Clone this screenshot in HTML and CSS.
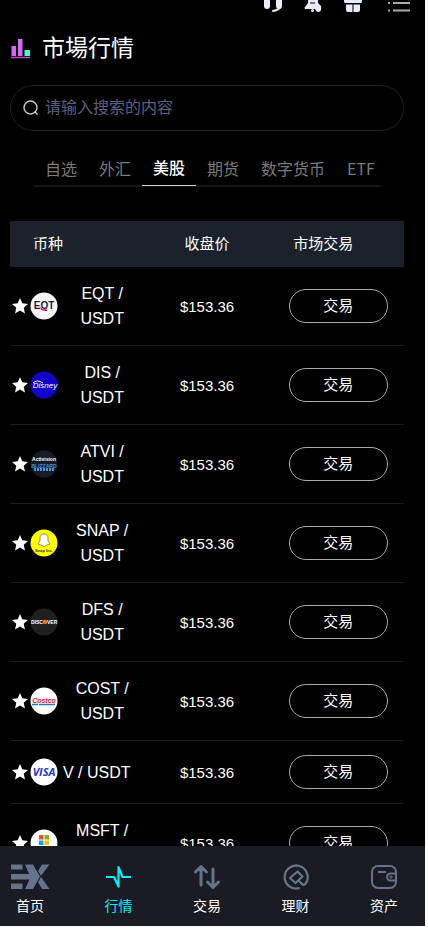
FILE: index.html
```html
<!DOCTYPE html>
<html lang="zh-CN">

<head>
    <meta charset="UTF-8">
    <meta name="viewport" content="width=device-width, initial-scale=1.0">
    <title>市場行情</title>
    <link rel="stylesheet" href="styles.css">
</head>

<body>

    <div class="app">
        <main class="content">
            <header class="topbar">
                <button class="icon-btn" aria-label="客服">
                    <svg width="20" height="20" viewBox="0 0 20 20">
                        <rect x="1" y="5" width="6" height="12" rx="3" fill="#eaeaff" />
                        <rect x="13" y="5" width="6" height="12" rx="3" fill="#eaeaff" />
                        <path d="M18 13q-1 5-8 6" fill="none" stroke="#eaeaff" stroke-width="2" stroke-linecap="round" />
                    </svg>
                </button>
                <button class="icon-btn" aria-label="通知">
                    <svg width="20" height="20" viewBox="0 0 20 20">
                        <path d="M10 1c4 0 5 3 5 6v4l3 3q1 5-2 6-3 0-4-3H2q-1-2 1-3l2-3V7c0-3 1-6 5-6z" fill="#eaeaff" />
                        <path d="M7 11h5" stroke="#000" />
                        <circle cx="9.500" cy="18.500" r="1.500" fill="#eaeaff" />
                    </svg>
                </button>
                <button class="icon-btn" aria-label="活动">
                    <svg width="20" height="20" viewBox="0 0 20 20">
                        <path d="M1 5h18v4q0 2-1 2H2q-1 0-1-2zM3 12.500h6.500V20H5q-2 0-2-2zM10.500 12.500H17V18q0 2-2 2h-4.500z" fill="#eaeaff" />
                    </svg>
                </button>
                <button class="icon-btn menu-btn" aria-label="菜单">
                    <svg width="24" height="20" viewBox="0 0 24 20">
                        <path d="M1 3h2M6 3h17M1 11h2M6 11h17M1 18.500h2M6 18.500h17" stroke="#aaa" stroke-width="2" />
                    </svg>
                </button>
            </header>

            <h1 class="title">
                <svg width="20" height="20" viewBox="0 0 20 20">
                    <path d="M1.500 7H6v10H1.500zM8 0h4.500v17H8z" fill="#d765f7" />
                    <path d="M14.500 11H20v6h-5.500z" fill="#3fffcd" />
                    <path d="M1 18.500h19" stroke="#b751d7" stroke-width="1.500" />
                </svg>
                市場行情
            </h1>

            <label class="search">
                <svg width="16" height="16" viewBox="0 0 16 16" fill="none" stroke="#ccc" stroke-width="1.400">
                    <circle cx="7.500" cy="7.500" r="6.500" />
                    <path d="M11.500 11.500l3 3" />
                </svg>
                <input type="text" placeholder="请输入搜索的内容" aria-label="搜索">
            </label>

            <nav class="tabs">
                <button class="tab">自选</button>
                <button class="tab">外汇</button>
                <button class="tab active">美股</button>
                <button class="tab">期货</button>
                <button class="tab">数字货币</button>
                <button class="tab">ETF</button>
            </nav>

            <table class="market">
                <thead>
                    <tr>
                        <th class="col-coin">币种</th>
                        <th class="col-price">收盘价</th>
                        <th class="col-trade">市场交易</th>
                    </tr>
                </thead>
                <tbody>
                    <tr>
                        <td>
                            <div class="coin">
                                <svg class="star" viewBox="0 0 16 16"><path d="M8 0l2.300 5.300 5.700.6-4.300 3.800 1.300 5.800L8 12.500l-5 3 1.300-5.800L0 5.900l5.700-.6z" /></svg>
                                <svg class="logo" viewBox="0 0 28 28">
                                    <circle cx="14" cy="14" r="13.500" fill="#f7f7fa" />
                                    <text class="logo-eqt" x="14" y="17" text-anchor="middle">EQT</text>
                                    <path d="M10.500 14.500q3.500 5 7 0l-1 3-3 1.500-3-1.500z" fill="#e6317c" />
                                </svg>
                                <span class="pair">EQT / USDT</span>
                            </div>
                        </td>
                        <td class="price">$153.36</td>
                        <td><button class="trade-btn">交易</button></td>
                    </tr>
                    <tr>
                        <td>
                            <div class="coin">
                                <svg class="star" viewBox="0 0 16 16"><path d="M8 0l2.300 5.300 5.700.6-4.300 3.800 1.300 5.800L8 12.500l-5 3 1.300-5.800L0 5.900l5.700-.6z" /></svg>
                                <svg class="logo" viewBox="0 0 28 28">
                                    <circle cx="14" cy="14" r="13.500" fill="#1203c9" />
                                    <path d="M3 12q4-4 10 0" fill="none" stroke="#fff" />
                                    <text class="logo-disney" x="15" y="17" text-anchor="middle">Disney</text>
                                </svg>
                                <span class="pair">DIS / USDT</span>
                            </div>
                        </td>
                        <td class="price">$153.36</td>
                        <td><button class="trade-btn">交易</button></td>
                    </tr>
                    <tr>
                        <td>
                            <div class="coin">
                                <svg class="star" viewBox="0 0 16 16"><path d="M8 0l2.300 5.300 5.700.6-4.300 3.800 1.300 5.800L8 12.500l-5 3 1.300-5.800L0 5.900l5.700-.6z" /></svg>
                                <svg class="logo" viewBox="0 0 28 28">
                                    <circle cx="14" cy="14" r="13.500" fill="#191c22" />
                                    <text class="logo-activision" x="14" y="11" text-anchor="middle">Activision</text>
                                    <text class="logo-blizzard" x="14" y="18" text-anchor="middle">BLIZZARD</text>
                                    <path d="M4 19.500h20" stroke="#4296e5" stroke-width="3" stroke-dasharray="2 1" />
                                </svg>
                                <span class="pair">ATVI / USDT</span>
                            </div>
                        </td>
                        <td class="price">$153.36</td>
                        <td><button class="trade-btn">交易</button></td>
                    </tr>
                    <tr>
                        <td>
                            <div class="coin">
                                <svg class="star" viewBox="0 0 16 16"><path d="M8 0l2.300 5.300 5.700.6-4.300 3.800 1.300 5.800L8 12.500l-5 3 1.300-5.800L0 5.900l5.700-.6z" /></svg>
                                <svg class="logo" viewBox="0 0 28 28">
                                    <circle cx="14" cy="14" r="13.500" fill="#fffc00" />
                                    <path d="M14 5c3 0 4 2 4 4v3l2 3-3 1-3 1.500-3-1.500-3-1 2-3V9c0-2 1-4 4-4z" fill="#fff" stroke="#777" stroke-width=".8" />
                                    <text class="logo-snap" x="14" y="23" text-anchor="middle">Snap Inc.</text>
                                </svg>
                                <span class="pair">SNAP / USDT</span>
                            </div>
                        </td>
                        <td class="price">$153.36</td>
                        <td><button class="trade-btn">交易</button></td>
                    </tr>
                    <tr>
                        <td>
                            <div class="coin">
                                <svg class="star" viewBox="0 0 16 16"><path d="M8 0l2.300 5.300 5.700.6-4.300 3.800 1.300 5.800L8 12.500l-5 3 1.300-5.800L0 5.900l5.700-.6z" /></svg>
                                <svg class="logo" viewBox="0 0 28 28">
                                    <circle cx="14" cy="14" r="13.500" fill="#202020" />
                                    <circle cx="15" cy="14" r="2.300" fill="#f47321" />
                                    <text class="logo-discover" x="1" y="16">DISC</text>
                                    <text class="logo-discover" x="17" y="16">VER</text>
                                </svg>
                                <span class="pair">DFS / USDT</span>
                            </div>
                        </td>
                        <td class="price">$153.36</td>
                        <td><button class="trade-btn">交易</button></td>
                    </tr>
                    <tr>
                        <td>
                            <div class="coin">
                                <svg class="star" viewBox="0 0 16 16"><path d="M8 0l2.300 5.300 5.700.6-4.300 3.800 1.300 5.800L8 12.500l-5 3 1.300-5.800L0 5.900l5.700-.6z" /></svg>
                                <svg class="logo" viewBox="0 0 28 28">
                                    <circle cx="14" cy="14" r="13.500" fill="#fff" />
                                    <text class="logo-costco" x="14" y="16" text-anchor="middle">Costco</text>
                                    <path d="M2 17.500h6M9 17.500h16" stroke="#2478bd" stroke-width="1.500" />
                                </svg>
                                <span class="pair">COST / USDT</span>
                            </div>
                        </td>
                        <td class="price">$153.36</td>
                        <td><button class="trade-btn">交易</button></td>
                    </tr>
                    <tr>
                        <td>
                            <div class="coin">
                                <svg class="star" viewBox="0 0 16 16"><path d="M8 0l2.300 5.300 5.700.6-4.300 3.800 1.300 5.800L8 12.500l-5 3 1.300-5.800L0 5.900l5.700-.6z" /></svg>
                                <svg class="logo" viewBox="0 0 28 28">
                                    <circle cx="14" cy="14" r="13.500" fill="#fff" />
                                    <text class="logo-visa" x="14" y="18" text-anchor="middle">VISA</text>
                                </svg>
                                <span class="pair">V / USDT</span>
                            </div>
                        </td>
                        <td class="price">$153.36</td>
                        <td><button class="trade-btn">交易</button></td>
                    </tr>
                    <tr>
                        <td>
                            <div class="coin">
                                <svg class="star" viewBox="0 0 16 16"><path d="M8 0l2.300 5.300 5.700.6-4.300 3.800 1.300 5.800L8 12.500l-5 3 1.300-5.800L0 5.900l5.700-.6z" /></svg>
                                <svg class="logo" viewBox="0 0 28 28">
                                    <circle cx="14" cy="14" r="13.500" fill="#fff" />
                                    <path d="M9 6h4.500v4.500H9z" fill="#f25022" />
                                    <path d="M14.500 6H19v4.500h-4.500z" fill="#7fba00" />
                                    <path d="M9 11.500h4.500V16H9z" fill="#00a4ef" />
                                    <path d="M14.500 11.500H19V16h-4.500z" fill="#ffb900" />
                                </svg>
                                <span class="pair">MSFT / USDT</span>
                            </div>
                        </td>
                        <td class="price">$153.36</td>
                        <td><button class="trade-btn">交易</button></td>
                    </tr>
                </tbody>
            </table>
        </main>

        <nav class="tabbar">
            <a href="#" class="tabbar-item">
                <svg width="40" height="26" viewBox="0 0 40 26" fill="#64748b">
                    <path d="M1 .500h11.500v5H1zM1 19.500h11.500v5.500H1zM1 10h18L15 .500h8l7 12-7 12.500h-8l4.500-9.500H1zM32 .500h7.500L31 12l-3-5zM28 18l3-5 8.500 12H32z" />
                </svg>
                首页
            </a>
            <a href="#" class="tabbar-item active">
                <svg width="26" height="26" viewBox="0 0 26 26" fill="none" stroke="#00f0ff" stroke-width="2.200">
                    <path d="M0 13h8l4.500 9.500V3l4 10H25" stroke-linejoin="round" />
                </svg>
                行情
            </a>
            <a href="#" class="tabbar-item">
                <svg width="28" height="26" viewBox="0 0 28 26" fill="none" stroke="#64748b" stroke-width="3" stroke-linecap="round" stroke-linejoin="round">
                    <path d="M8 21V3M2.500 8L8 2.500 13.500 8M20 5v18M14.500 18l5.500 5.500 5.500-5.500" />
                </svg>
                交易
            </a>
            <a href="#" class="tabbar-item">
                <svg width="26" height="26" viewBox="0 0 26 26" fill="none" stroke="#64748b" stroke-width="2.300" stroke-linecap="round" stroke-linejoin="round">
                    <path d="M16 24.200a11.500 11.500 0 1 1 7-5.200q-1.500 3-4 1l-3-3" />
                    <path d="M14.500 7.500l5 5-7 6.500-5.500-5z" />
                </svg>
                理财
            </a>
            <a href="#" class="tabbar-item">
                <svg width="26" height="26" viewBox="0 0 26 26" fill="none" stroke="#64748b" stroke-width="2">
                    <rect x="1" y="2" width="24" height="22" rx="6" />
                    <path d="M7 8h8M25 9.500h-5.500a3.500 3.500 0 0 0 0 7H25" />
                    <path d="M18 13h4M20 11v4" stroke-width="1" />
                </svg>
                资产
            </a>
        </nav>
    </div>

</body>

</html>
```

FILE: styles.css
```css
* {
    box-sizing: border-box;
}

body,
html {
    height: 100%;
    margin: 0;
    background-color: #fff;
    font-family: "Liberation Sans", "Noto Sans CJK SC", sans-serif;
}

body {
    padding: 0 3px 13px 0;
}

button {
    padding: 0;
    border: none;
    background: none;
    color: inherit;
    font-family: inherit;
    cursor: pointer;
}

.app {
    display: flex;
    flex-direction: column;
    height: 100%;
    background-color: #000;
    color: #fff;
}

.content {
    flex: 1;
    min-height: 0;
    padding: 0 21px 0 10px;
    overflow: hidden;
}

/* top icons, scrolled partly out of view */
.topbar {
    display: flex;
    justify-content: flex-end;
    align-items: flex-end;
    gap: 20px;
    height: 12px;
    margin-right: -7px;
}

.icon-btn svg {
    display: block;
}

.menu-btn {
    margin-left: 4px;
}

.title {
    display: flex;
    align-items: center;
    gap: 12px;
    margin: 20px 0;
    font-size: 23px;
    line-height: 33px;
    font-weight: normal;
}

.search {
    display: flex;
    align-items: center;
    gap: 6px;
    height: 46px;
    padding: 0 12px;
    border: 1px solid #1c222b;
    border-radius: 23px;
}

.search input {
    flex: 1;
    min-width: 0;
    padding: 0;
    border: none;
    outline: none;
    background: none;
    color: #fff;
    font-family: inherit;
    font-size: 16px;
}

.search input::placeholder {
    color: #5b6080;
}

.tabs {
    display: flex;
    justify-content: space-between;
    margin: 14px 23px 34px 24px;
    border-bottom: 2px solid #131519;
}

.tab {
    height: 41px;
    margin-bottom: -1px;
    padding: 4px 11px 0;
    color: #7b7b7b;
    font-family: "Noto Sans CJK SC", sans-serif;
    font-size: 16px;
    white-space: nowrap;
}

.tab.active {
    border-bottom: 1px solid #ccc;
    color: #fff;
    font-weight: 500;
}

.market {
    width: 100%;
    border-collapse: collapse;
    table-layout: fixed;
    text-align: center;
}

.market th {
    height: 46px;
    padding: 0 0 4px;
    background-color: #1c222b;
    font-size: 15px;
    font-weight: normal;
}

.market .col-coin {
    padding-left: 23px;
    text-align: left;
}

.market .col-trade {
    padding-right: 30px;
}

.market td {
    padding: 14px 0;
    border-bottom: 1px solid #171c23;
    font-size: 16px;
    line-height: 25px;
}

.market .price {
    font-size: 15px;
}

.coin {
    display: flex;
    align-items: center;
    padding-left: 2px;
}

.star {
    flex: none;
    width: 16px;
    height: 16px;
    margin-right: 2px;
    fill: #fff;
}

.logo {
    flex: none;
    width: 28px;
    height: 28px;
}

.pair {
    padding-left: 5px;
}

.trade-btn {
    width: 99px;
    height: 34px;
    padding-bottom: 4px;
    border: 1px solid #aaa;
    border-radius: 17px;
    font-size: 15px;
}

.logo-eqt {
    fill: #202448;
    font-size: 10px;
    font-weight: bold;
}

.logo-disney {
    fill: #fff;
    font-size: 8px;
    font-style: italic;
}

.logo-activision {
    fill: #fff;
    font-size: 5px;
    font-weight: bold;
}

.logo-blizzard {
    fill: #4296e5;
    font-size: 5px;
    font-weight: bold;
}

.logo-snap {
    fill: #333;
    font-size: 4px;
    font-weight: bold;
}

.logo-discover {
    fill: #fff;
    font-size: 5px;
    font-weight: bold;
}

.logo-costco {
    fill: #e31837;
    font-size: 7px;
    font-weight: bold;
    font-style: italic;
}

.logo-visa {
    fill: #2437c9;
    font-family: "Open Sans", sans-serif;
    font-size: 11px;
    font-weight: bold;
    font-style: italic;
}

.tabbar {
    display: flex;
    justify-content: space-between;
    height: 80px;
    padding: 18px 21px 0 10px;
    background-color: #1b1b23;
}

.tabbar-item {
    display: flex;
    flex-direction: column;
    align-items: center;
    gap: 6px;
    min-width: 40px;
    color: #fff;
    font-size: 14px;
    line-height: 20px;
    text-decoration: none;
}

.tabbar-item.active {
    color: #00f0ff;
}
```
